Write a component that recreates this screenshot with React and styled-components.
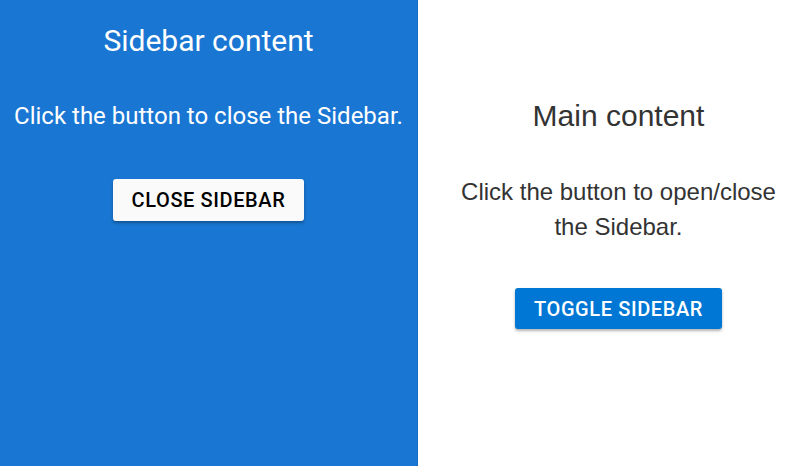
import React, { useState } from "react";
import styled, { createGlobalStyle } from "styled-components";

const GlobalStyle = createGlobalStyle`
  html, body {
    margin: 0;
    padding: 0;
    height: 100%;
  }
  #root {
    height: 100%;
  }
`;

const Layout = styled.div`
  display: flex;
  height: 466px;
  width: 796px;
  overflow: hidden;
  background: #fff;
`;

const Sidebar = styled.aside`
  width: 418px;
  flex-shrink: 0;
  background: #1976d2;
  border-right: 1px solid #1a6cc4;
  color: #fff;
  font-family: Roboto, "Liberation Sans", sans-serif;
  display: flex;
  flex-direction: column;
  align-items: center;
  padding-top: 24px;
  box-sizing: border-box;
`;

const SideTitle = styled.h2`
  margin: 0;
  font-size: 30px;
  font-weight: 400;
  line-height: 34px;
`;

const SideText = styled.p`
  margin: 44px 0 0;
  font-size: 24px;
  line-height: 28px;
`;

const Main = styled.main`
  flex: 1;
  display: flex;
  flex-direction: column;
  align-items: center;
  padding: 0 0 0 23px;
  color: #333;
  font-family: "Liberation Sans", Arial, sans-serif;
  text-align: center;
`;

const MainTitle = styled.h1`
  margin: 99px 0 0;
  font-size: 30px;
  font-weight: 400;
  line-height: 34px;
`;

const MainText = styled.p`
  margin: 41px 0 0;
  width: 340px;
  font-size: 24px;
  line-height: 35px;
`;

const Button = styled.button`
  font-family: Roboto, "Liberation Sans", sans-serif;
  font-size: 20px;
  font-weight: 500;
  letter-spacing: 0.6px;
  text-transform: uppercase;
  border: none;
  border-radius: 3px;
  height: ${(p) => (p.$primary ? 41 : 42)}px;
  padding: 0 19px;
  cursor: pointer;
  box-shadow: 0 2px 3px rgba(0, 0, 0, 0.3);
  background: ${(p) => (p.$primary ? "#0077d4" : "#fafafa")};
  color: ${(p) => (p.$primary ? "#fff" : "#000")};
  margin-top: ${(p) => p.$top}px;
`;

export default function App() {
  const [open, setOpen] = useState(true);
  return (
    <>
      <GlobalStyle />
      <Layout>
        {open && (
          <Sidebar>
            <SideTitle>Sidebar content</SideTitle>
            <SideText>Click the button to close the Sidebar.</SideText>
            <Button $top={49} onClick={() => setOpen(false)}>
              Close Sidebar
            </Button>
          </Sidebar>
        )}
        <Main>
          <MainTitle>Main content</MainTitle>
          <MainText>Click the button to open/close the Sidebar.</MainText>
          <Button $primary $top={44} onClick={() => setOpen(!open)}>
            Toggle Sidebar
          </Button>
        </Main>
      </Layout>
    </>
  );
}
